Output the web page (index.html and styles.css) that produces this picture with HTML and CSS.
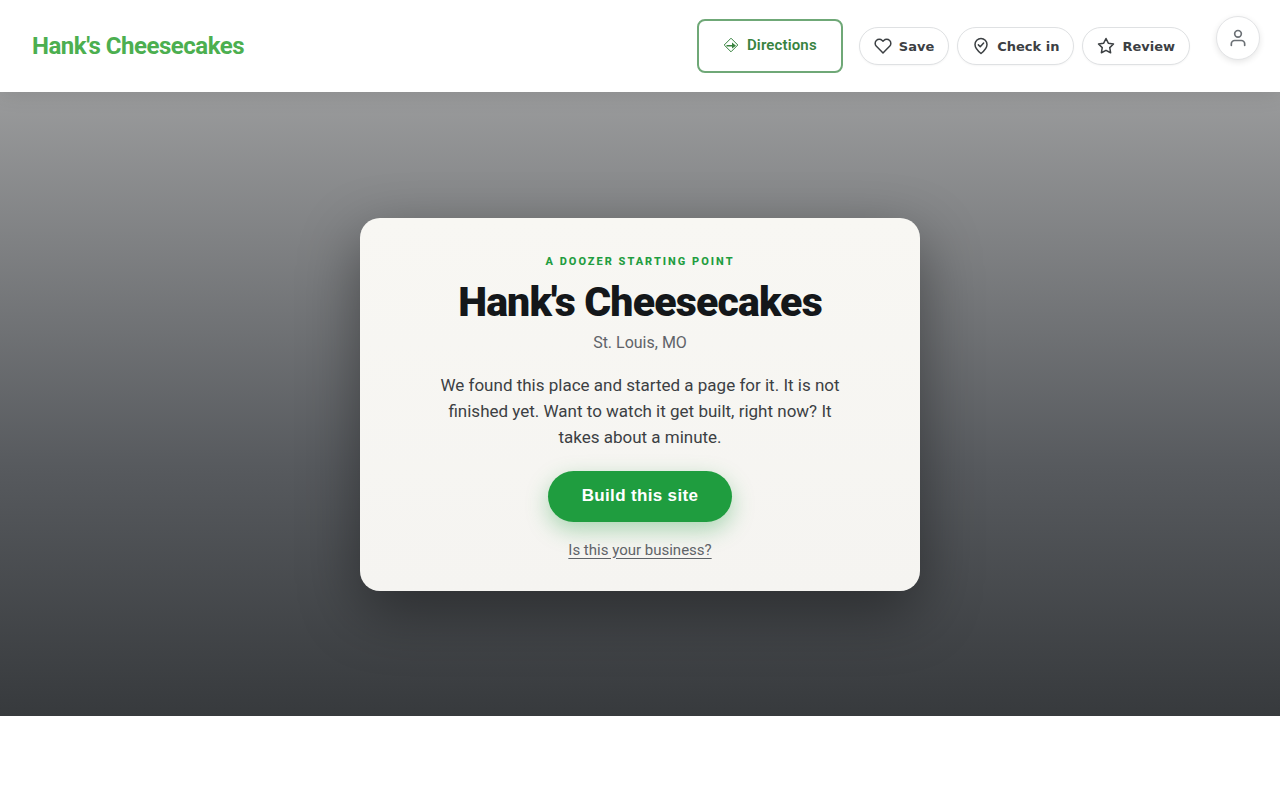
FILE: index.html
```html
<!DOCTYPE html>
<html lang="en">
<head>
    <meta charset="UTF-8">
    <meta name="viewport" content="width=device-width, initial-scale=1.0">
    <title>Hank's Cheesecakes</title>
    <link rel="stylesheet" href="styles.css">
</head>
<body>
    <header class="site-header">
        <a class="logo" href="#">Hank's Cheesecakes</a>
        <nav class="actions">
            <a class="directions" href="#">
                <svg class="directions-icon" viewBox="0 0 16 16" aria-hidden="true">
                    <path d="M8 1.200 14.800 8 8 14.800 1.200 8Z"/>
                    <path class="arrow" d="M3.500 9.500V8H9V5.500L13 8.700 9 11.500V9.500Z"/>
                </svg>
                Directions
            </a>
            <div class="pills">
                <button class="pill" type="button">
                    <svg viewBox="0 0 24 24" aria-hidden="true"><path d="M20.84 4.61a5.5 5.5 0 0 0-7.78 0L12 5.67l-1.06-1.06a5.5 5.5 0 0 0-7.78 7.78l1.06 1.06L12 21.23l7.78-7.78 1.06-1.06a5.5 5.5 0 0 0 0-7.78z"/></svg>
                    Save
                </button>
                <button class="pill" type="button">
                    <svg viewBox="0 0 24 24" aria-hidden="true"><path d="M12 22s-8-6.5-8-12a8 8 0 0 1 16 0c0 5.5-8 12-8 12z"/><path d="m8.5 10.5 2.5 2.5 4.5-5"/></svg>
                    Check in
                </button>
                <button class="pill" type="button">
                    <svg viewBox="0 0 24 24" aria-hidden="true"><path d="m12 2 3.09 6.26L22 9.27l-5 4.87 1.18 6.88L12 17.77l-6.18 3.25L7 14.14 2 9.27l6.91-1.01z"/></svg>
                    Review
                </button>
            </div>
        </nav>
        <button class="account" type="button" aria-label="Account">
            <svg viewBox="0 0 24 24" aria-hidden="true"><path d="M20 21v-2a4 4 0 0 0-4-4H8a4 4 0 0 0-4 4v2"/><circle cx="12" cy="7" r="4"/></svg>
        </button>
    </header>

    <main class="hero">
        <section class="card">
            <p class="eyebrow">A Doozer starting point</p>
            <h1>Hank's Cheesecakes</h1>
            <p class="place">St. Louis, MO</p>
            <p class="intro">We found this place and started a page for it. It is not finished yet. Want to watch it get built, right now? It takes about a minute.</p>
            <button class="build" type="button">Build this site</button>
            <a class="claim" href="#">Is this your business?</a>
        </section>
    </main>
</body>
</html>
```
FILE: styles.css
```css
* {
    box-sizing: border-box;
}
body {
    margin: 0;
    background: #fff;
    color: #14171a;
    font-family: Roboto, "Liberation Sans", sans-serif;
}

/* Header */
.site-header {
    position: relative;
    z-index: 1;
    display: flex;
    align-items: center;
    justify-content: space-between;
    padding: 19px 90px 19px 32px;
    background: #fff;
    box-shadow: 0 2px 20px rgba(0, 0, 0, 0.1);
}
.logo {
    color: #4caf50;
    font-size: 24px;
    font-weight: 700;
    letter-spacing: -0.02em;
    text-decoration: none;
}
.actions {
    display: flex;
    align-items: center;
    gap: 16px;
}
.directions {
    display: flex;
    align-items: center;
    gap: 8px;
    padding: 15px 24px 17px;
    border: 2px solid #6fa877;
    border-radius: 8px;
    color: #38833f;
    font-size: 15px;
    font-weight: 600;
    line-height: 18px;
    letter-spacing: 0.01em;
    text-decoration: none;
}
.directions-icon {
    width: 16px;
    height: 16px;
    fill: none;
    stroke: currentColor;
    stroke-width: 1;
}
.directions-icon .arrow {
    fill: currentColor;
    stroke: none;
}
.pills {
    display: flex;
    gap: 8px;
}
.pill {
    display: flex;
    align-items: center;
    gap: 7px;
    height: 38px;
    padding: 0 14px;
    border: 1px solid #dfe1e3;
    border-radius: 19px;
    background: #fff;
    box-shadow: 0 1px 2px rgba(0, 0, 0, 0.04);
    color: #3c4043;
    font-family: "DejaVu Sans", sans-serif;
    font-size: 13px;
    font-weight: 700;
}
.pill svg,
.account svg {
    width: 18px;
    height: 18px;
    fill: none;
    stroke: currentColor;
    stroke-width: 2;
    stroke-linecap: round;
    stroke-linejoin: round;
}
/* floats over the header corner */
.account {
    position: absolute;
    top: 16px;
    right: 20px;
    display: flex;
    align-items: center;
    justify-content: center;
    width: 44px;
    height: 44px;
    padding: 0;
    border: 1px solid #e3e4e6;
    border-radius: 50%;
    background: #fff;
    box-shadow: 0 2px 6px rgba(0, 0, 0, 0.1);
    color: #6b7075;
}
.account svg {
    width: 20px;
    height: 20px;
}

/* Hero */
.hero {
    display: flex;
    align-items: center;
    justify-content: center;
    min-height: 78vh;
    padding: 24px;
    background: linear-gradient(180deg, #9a9b9c 0%, #575a5e 60%, #373a3d 100%);
}
.card {
    display: flex;
    flex-direction: column;
    align-items: center;
    width: 100%;
    max-width: 560px;
    padding: 36px 40px 31px;
    border-radius: 20px;
    background: linear-gradient(180deg, #f8f7f3, #f5f4f1);
    box-shadow: 0 20px 60px rgba(0, 0, 0, 0.4);
    text-align: center;
}
.eyebrow {
    margin: 0 0 11px;
    color: #1f9d3f;
    font-size: 11px;
    font-weight: 800;
    line-height: 16px;
    letter-spacing: 2px;
    text-transform: uppercase;
}
h1 {
    margin: 0 0 9px;
    font-size: 41px;
    font-weight: 900;
    line-height: 42px;
    letter-spacing: -0.02em;
}
.place {
    margin: 0 0 18px;
    color: #5f6368;
    font-size: 16px;
    line-height: 22px;
}
.intro {
    max-width: 420px;
    margin: 0 0 21px;
    color: #3c4043;
    font-size: 17px;
    line-height: 26px;
}
.build {
    height: 51px;
    padding: 0 34px;
    border: 0;
    border-radius: 26px;
    background: #1f9d3f;
    box-shadow: 0 8px 22px rgba(31, 157, 63, 0.35);
    color: #fff;
    font-family: "Liberation Sans", sans-serif;
    font-size: 17px;
    font-weight: 700;
    letter-spacing: 0.02em;
}
.claim {
    margin-top: 18px;
    color: #5f6368;
    font-size: 15px;
    line-height: 20px;
    text-underline-offset: 3px;
}
```
